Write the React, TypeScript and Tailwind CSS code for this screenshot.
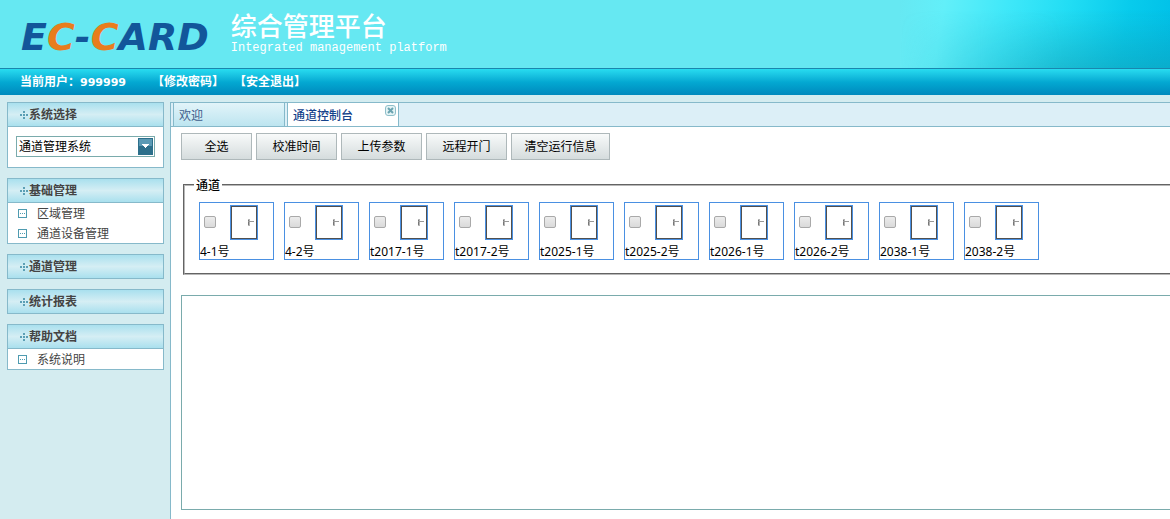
import { useState } from 'react';

const LINKS = {
  basic: ['区域管理', '通道设备管理'],
  help: ['系统说明'],
};

const ACTIONS = [
  { label: '全选', width: 'w-[71px]' },
  { label: '校准时间', width: 'w-[81px]' },
  { label: '上传参数', width: 'w-[81px]' },
  { label: '远程开门', width: 'w-[81px]' },
  { label: '清空运行信息', width: 'w-[99px]' },
];

const DOORS = [
  '4-1号',
  '4-2号',
  't2017-1号',
  't2017-2号',
  't2025-1号',
  't2025-2号',
  't2026-1号',
  't2026-2号',
  '2038-1号',
  '2038-2号',
];

function DotsIcon() {
  return (
    <svg width="8" height="8" viewBox="0 0 8 8" fill="#5b9fb5" shapeRendering="crispEdges" aria-hidden="true">
      <path d="M3 0h2v2H3zM3 3h2v2H3zM3 6h2v2H3zM0 3h2v2H0zM6 3h2v2H6z" />
    </svg>
  );
}

function ItemIcon() {
  return (
    <svg width="9" height="9" viewBox="0 0 9 9" shapeRendering="crispEdges" aria-hidden="true">
      <rect width="9" height="9" fill="#4f9bb0" />
      <rect x="1" y="1" width="7" height="7" fill="#fff" />
      <path d="M2 4h1v1H2zM4 4h1v1H4zM6 4h1v1H6z" fill="#4f9bb0" />
    </svg>
  );
}

function DoorIcon() {
  return (
    <svg width="28" height="35" viewBox="0 0 28 35" shapeRendering="crispEdges" aria-hidden="true">
      <rect width="28" height="35" fill="#4a90e2" />
      <rect x="1" y="1" width="26" height="33" fill="#505050" />
      <rect x="2" y="2" width="24" height="31" fill="#fff" />
      <path d="M18 14h2v7h-2z" fill="#b5b5b5" />
      <path d="M18 15h1v5h-1z" fill="#777" />
      <path d="M18 16h6v1h-6z" fill="#999" />
    </svg>
  );
}

function Panel({ title, children }: { title: string; children?: React.ReactNode }) {
  return (
    <section className={children ? 'border border-t-0 border-[#86b9ca] bg-white' : ''}>
      <h2
        className={
          (children ? '-mx-px ' : '') +
          'flex h-[25px] items-center gap-px border border-[#86b9ca] bg-linear-to-b from-[#a9e0ee] via-[#d5eef4] to-[#a9e0ee] pl-3 font-bold text-[#444]'
        }
      >
        <DotsIcon />
        {title}
      </h2>
      {children}
    </section>
  );
}

function LinkList({ items }: { items: string[] }) {
  return (
    <ul>
      {items.map((item) => (
        <li key={item} className="h-5">
          <a href="#" className="flex h-5 items-center gap-[10px] pl-[10px] text-[#444]">
            <ItemIcon />
            <span className="pt-[2px]">{item}</span>
          </a>
        </li>
      ))}
    </ul>
  );
}

function Header() {
  return (
    <header>
      <div className="relative flex h-[68px] items-start bg-[#66e8f2]">
        <div className="absolute inset-y-0 right-0 w-[270px] bg-[linear-gradient(100deg,#66e8f2_0%,#62eff9_16%,#40e8f9_38%,#22ddf4_60%,#08cbec_82%,#00c0e8_100%)]">
          <div className="h-full bg-linear-to-b from-[#1496ac]/0 from-15% to-[#1496ac]/45 [mask-image:linear-gradient(to_right,transparent,black_60%)]" />
        </div>
        <div className="ml-[21px] mt-[18px] font-['DejaVu_Sans'] text-[38px] font-bold italic leading-[38px] text-[#12569a]">
          E<span className="text-[#e87d1c]">C</span>-<span className="text-[#e87d1c]">C</span>ARD
        </div>
        <div className="ml-[22px] mt-3 text-white">
          <h1 className="text-[26px] font-medium leading-7">综合管理平台</h1>
          <p className="mt-[2px] font-['Liberation_Mono'] text-[12px] leading-3">Integrated management platform</p>
        </div>
      </div>
      <nav className="flex h-[27px] items-center border-t border-[#1a86ae] bg-linear-to-b from-[#28dcf0] via-[#04a9d2] to-[#0089bd] pl-5 font-bold text-white">
        <span>
          当前用户：<span className="font-['DejaVu_Sans'] text-[11px]">999999</span>
        </span>
        <a href="#" className="ml-[26px]">【修改密码】</a>
        <a href="#" className="ml-[10px]">【安全退出】</a>
      </nav>
    </header>
  );
}

function Sidebar() {
  return (
    <aside className="flex w-[170px] shrink-0 flex-col gap-[10px] pl-[7px] pr-[6px] pt-[7px]">
      <Panel title="系统选择">
        <div className="px-2 pb-[10px] pt-[9px]">
          <div className="relative">
            <select
              aria-label="系统选择"
              className="block h-[21px] w-full appearance-none border border-[#7aabac] bg-white pl-[2px] text-black"
            >
              <option>通道管理系统</option>
            </select>
            <svg
              className="pointer-events-none absolute right-[2px] top-[2px]"
              width="15"
              height="17"
              viewBox="0 0 15 17"
              shapeRendering="crispEdges"
              aria-hidden="true"
            >
              <rect width="15" height="17" fill="#2d6f8b" />
              <rect x="1" y="1" width="13" height="7" fill="#5b9ab5" />
              <path d="M4 6h7v1H4zM5 7h5v1H5zM6 8h3v1H6zM7 9h1v1H7z" fill="#fff" />
            </svg>
          </div>
        </div>
      </Panel>
      <Panel title="基础管理">
        <LinkList items={LINKS.basic} />
      </Panel>
      <Panel title="通道管理" />
      <Panel title="统计报表" />
      <Panel title="帮助文档">
        <LinkList items={LINKS.help} />
      </Panel>
    </aside>
  );
}

function Tabs() {
  return (
    <div className="flex h-[25px] gap-[2px] border-y border-[#86b9ca] bg-[#dceff7] pl-[2px]">
      <button className="w-[112px] border-x border-[#86b9ca] bg-linear-to-b from-[#e2f4f9] to-[#bde5f0] pl-[5px] pt-[2px] text-left text-[#3f5d8c]">
        欢迎
      </button>
      <div className="relative flex w-[112px] border-x border-[#86b9ca] bg-white">
        <button className="pl-[5px] pt-[2px] font-medium text-[#15428b]">通道控制台</button>
        <button aria-label="关闭" className="absolute right-[2px] top-[2px]">
          <svg width="11" height="11" viewBox="0 0 11 11" aria-hidden="true">
            <rect x="0.5" y="0.5" width="10" height="10" rx="2.5" fill="#e4f3f5" stroke="#8fbfca" />
            <path d="M3 3l5 5M8 3l-5 5" stroke="#6ba3b0" strokeWidth="2" />
          </svg>
        </button>
      </div>
    </div>
  );
}

export default function App() {
  const [checked, setChecked] = useState<string[]>([]);

  function toggle(door: string) {
    setChecked((prev) => (prev.includes(door) ? prev.filter((d) => d !== door) : [...prev, door]));
  }

  return (
    <div className="flex min-h-screen flex-col overflow-hidden bg-[#d4ecf0] font-['Noto_Sans','Noto_Sans_CJK_SC',sans-serif] text-[12px] leading-4">
      <Header />
      <div className="flex flex-1">
        <Sidebar />
        <main className="mt-[7px] flex min-w-0 flex-1 flex-col border-l border-[#86b9ca] bg-white">
          <Tabs />
          <div className="flex gap-1 pl-[10px] pt-[6px]">
            {ACTIONS.map((action) => (
              <button
                key={action.label}
                className={`h-[27px] border border-[#aeb8ba] bg-linear-to-b from-[#f8fafa] to-[#d5dcdd] text-black ${action.width}`}
              >
                {action.label}
              </button>
            ))}
          </div>

          {/* 通道列表 */}
          <fieldset className="ml-3 mt-[17px] h-[98px] border-2 border-r-0 border-[#b8b8b8] pl-[14px] [border-style:groove]">
            <legend className="-ml-[5px] px-[2px] pt-[2px] font-medium leading-[14px] text-black">通道</legend>
            <div className="mt-[9px] flex gap-[10px]">
              {DOORS.map((door) => (
                <label key={door} className="flex h-[58px] w-[75px] shrink-0 flex-col border border-[#4a90e2] text-black">
                  <span className="flex items-center gap-[14px] pl-1 pt-[2px]">
                    <input
                      type="checkbox"
                      checked={checked.includes(door)}
                      onChange={() => toggle(door)}
                      className="mb-[2px] size-3 appearance-none rounded-[2px] border border-[#a9a9a9] bg-linear-to-b from-[#ececec] to-[#dadada] checked:bg-[#4a90e2]"
                    />
                    <DoorIcon />
                  </span>
                  <span className="mt-1">{door}</span>
                </label>
              ))}
            </div>
          </fieldset>

          {/* 运行信息 */}
          <div className="mb-[9px] ml-[10px] mt-5 flex-1 border border-r-0 border-[#7aabac]" />
        </main>
      </div>
    </div>
  );
}
